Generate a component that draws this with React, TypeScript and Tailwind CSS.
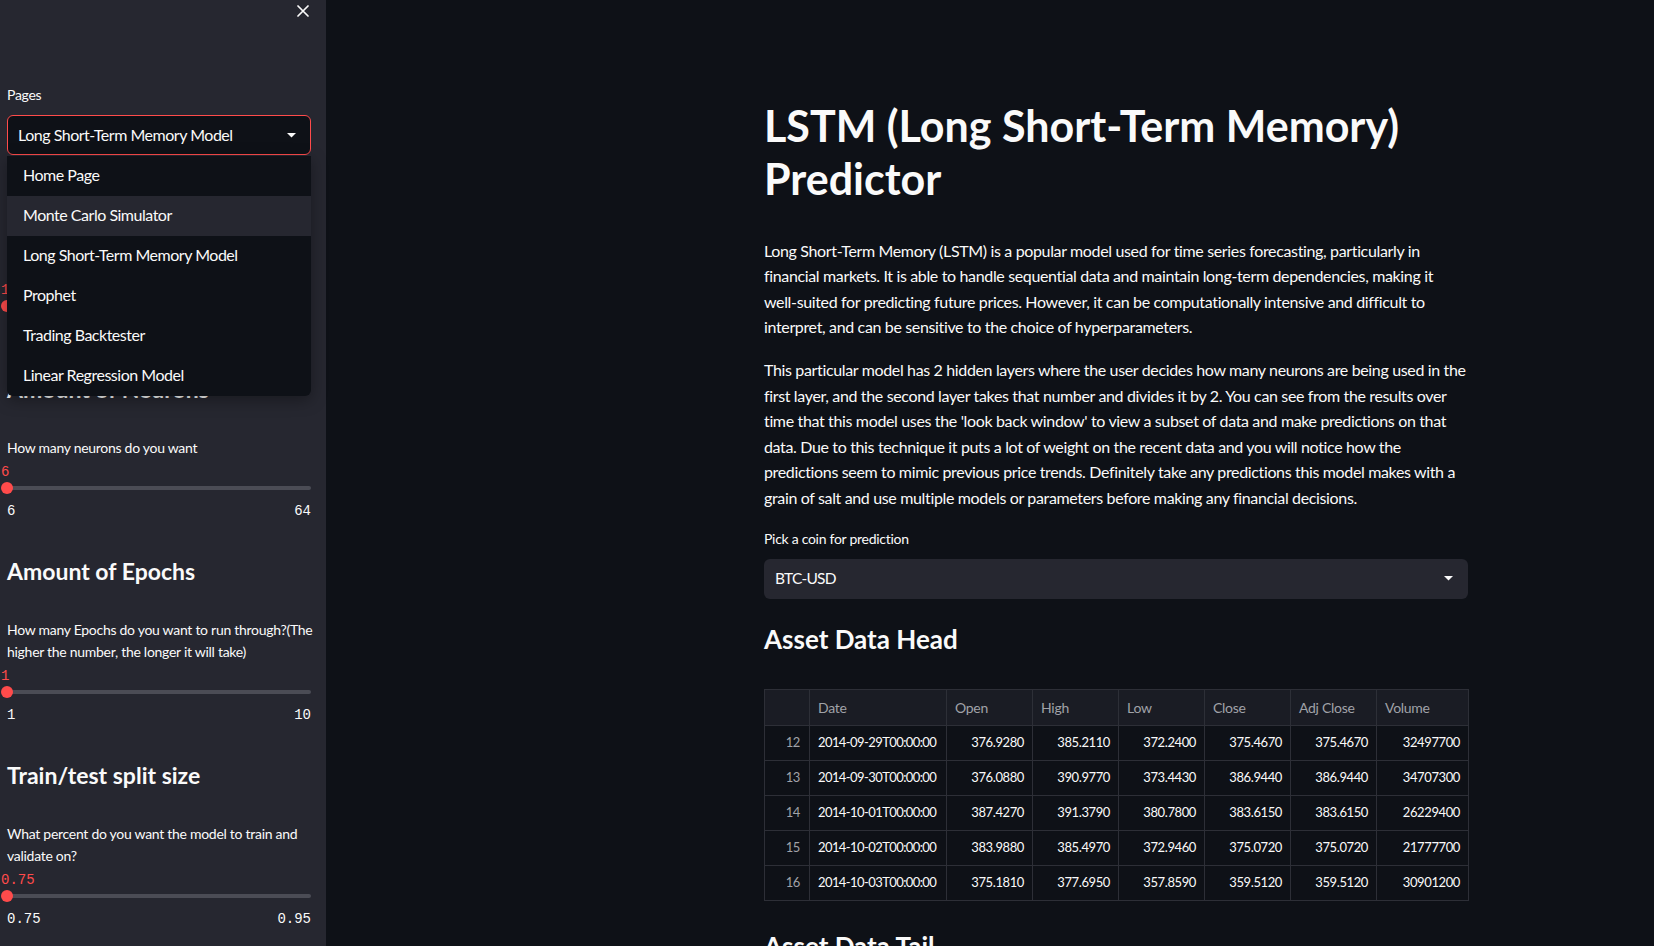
import React from 'react'

const introLines = [
  'Long Short-Term Memory (LSTM) is a popular model used for time series forecasting, particularly in',
  'financial markets. It is able to handle sequential data and maintain long-term dependencies, making it',
  'well-suited for predicting future prices. However, it can be computationally intensive and difficult to',
  'interpret, and can be sensitive to the choice of hyperparameters.',
]

const detailLines = [
  'This particular model has 2 hidden layers where the user decides how many neurons are being used in the',
  'first layer, and the second layer takes that number and divides it by 2. You can see from the results over',
  "time that this model uses the 'look back window' to view a subset of data and make predictions on that",
  'data. Due to this technique it puts a lot of weight on the recent data and you will notice how the',
  'predictions seem to mimic previous price trends. Definitely take any predictions this model makes with a',
  'grain of salt and use multiple models or parameters before making any financial decisions.',
]

const pages = [
  'Home Page',
  'Monte Carlo Simulator',
  'Long Short-Term Memory Model',
  'Prophet',
  'Trading Backtester',
  'Linear Regression Model',
]

const columns = ['Date', 'Open', 'High', 'Low', 'Close', 'Adj Close', 'Volume']
const colWidths = ['w-[45px]', 'w-[137px]', 'w-[86px]', 'w-[86px]', 'w-[86px]', 'w-[86px]', 'w-[86px]', 'w-[92px]']

const rows = [
  ['12', '2014-09-29T00:00:00', '376.9280', '385.2110', '372.2400', '375.4670', '375.4670', '32497700'],
  ['13', '2014-09-30T00:00:00', '376.0880', '390.9770', '373.4430', '386.9440', '386.9440', '34707300'],
  ['14', '2014-10-01T00:00:00', '387.4270', '391.3790', '380.7800', '383.6150', '383.6150', '26229400'],
  ['15', '2014-10-02T00:00:00', '383.9880', '385.4970', '372.9460', '375.0720', '375.0720', '21777700'],
  ['16', '2014-10-03T00:00:00', '375.1810', '377.6950', '357.8590', '359.5120', '359.5120', '30901200'],
]

function Caret() {
  return (
    <svg width="9" height="5" viewBox="0 0 9 5" className="shrink-0">
      <path d="M0 0h9L4.5 4.6z" fill="#fafafa" />
    </svg>
  )
}

type SliderProps = {
  title: string
  label: string[]
  value: string
  min: string
  max: string
  first?: boolean
}

function SliderBlock({ title, label, value, min, max, first }: SliderProps) {
  return (
    <section className={first ? 'mt-[36px]' : 'mt-[34px]'}>
      <h3 className="text-[23px] font-bold leading-[32px]">{title}</h3>
      <div className="mt-[32px] text-[14px] leading-[22px] tracking-[-0.02em]">
        {label.map((line) => (
          <span key={line} className="block whitespace-nowrap">{line}</span>
        ))}
      </div>
      <div className="-ml-[6px] mt-[3px] h-[20px] font-['Liberation_Mono',monospace] text-[14px] leading-[20px] text-[#ff4b4b]">
        {value}
      </div>
      <div className="relative flex h-[12px] items-center">
        <div className="h-[4px] w-full rounded-full bg-[#4b4c55]" />
        <div className="absolute -left-[6px] top-0 h-[12px] w-[12px] rounded-full bg-[#ff4b4b]" />
      </div>
      <div className="mt-[7px] flex h-[20px] justify-between font-['Liberation_Mono',monospace] text-[14px] leading-[20px]">
        <span>{min}</span>
        <span>{max}</span>
      </div>
    </section>
  )
}

export default function App() {
  return (
    <div className="flex h-[946px] w-full overflow-hidden bg-[#0e1117] font-['Lato',sans-serif] text-[#fafafa]">
      {/* Sidebar */}
      <aside className="w-[326px] shrink-0 bg-[#262730] pl-[7px] pr-[15px]">
        <div className="flex h-[84px] justify-end pr-[2px] pt-[5px]">
          <svg width="12" height="12" viewBox="0 0 12 12">
            <path d="M1 1l10 10M11 1L1 11" stroke="#fafafa" strokeWidth="1.7" strokeLinecap="round" />
          </svg>
        </div>
        <div className="text-[14px] leading-[22px] tracking-[-0.02em]">Pages</div>
        <div className="relative z-10 mt-[9px]">
          <div className="flex h-[40px] items-center justify-between rounded-[6px] border border-[#ff4b4b] bg-[#0e1117] pl-[10px] pr-[14px] text-[16px] tracking-[-0.03em]">
            <span>Long Short-Term Memory Model</span>
            <Caret />
          </div>
          <ul className="absolute left-0 right-0 top-[41px] overflow-hidden rounded-b-[6px] bg-[#0e1117] shadow-[0_4px_16px_rgba(0,0,0,0.35)]">
            {pages.map((page) => (
              <li
                key={page}
                className={`flex h-[40px] items-center pb-[2px] pl-[16px] text-[16px] tracking-[-0.03em] ${page === 'Monte Carlo Simulator' ? 'bg-[#262730]' : ''}`}
              >
                {page}
              </li>
            ))}
          </ul>
        </div>
        <SliderBlock first title="Look Back Window" label={['How many days do you want to look back?']} value="1" min="1" max="30" />
        <SliderBlock title="Amount of Neurons" label={['How many neurons do you want']} value="6" min="6" max="64" />
        <SliderBlock
          title="Amount of Epochs"
          label={['How many Epochs do you want to run through?(The', 'higher the number, the longer it will take)']}
          value="1"
          min="1"
          max="10"
        />
        <SliderBlock
          title="Train/test split size"
          label={['What percent do you want the model to train and', 'validate on?']}
          value="0.75"
          min="0.75"
          max="0.95"
        />
      </aside>

      {/* Main */}
      <main className="flex-1 pl-[438px] pt-[100px]">
        <div className="w-[704px]">
          <h1 className="text-[43px] font-bold leading-[52.8px]">
            LSTM (Long Short-Term Memory)
            <br />
            Predictor
          </h1>
          <p className="mt-[32px] text-[16px] leading-[25.6px] tracking-[-0.022em]">
            {introLines.map((line) => (
              <span key={line} className="block whitespace-nowrap">{line}</span>
            ))}
          </p>
          <p className="mt-[17px] text-[16px] leading-[25.6px] tracking-[-0.022em]">
            {detailLines.map((line) => (
              <span key={line} className="block whitespace-nowrap">{line}</span>
            ))}
          </p>
          <div className="mt-[17px] text-[14px] leading-[22.4px] tracking-[-0.02em]">Pick a coin for prediction</div>
          <div className="mt-[9px] flex h-[40px] items-center justify-between rounded-[6px] bg-[#262730] pl-[11px] pr-[15px] text-[15.5px] tracking-[-0.05em]">
            <span>BTC-USD</span>
            <Caret />
          </div>

          <h2 className="mt-[22px] text-[26px] font-bold leading-[36px]">Asset Data Head</h2>
          <table className="mt-[32px] w-[704px] table-fixed border-collapse border border-[#2d2f37] text-[14px]">
            <colgroup>
              {colWidths.map((w, i) => (
                <col key={i} className={w} />
              ))}
            </colgroup>
            <thead>
              <tr className="h-[36px] bg-[#1a1c24] text-[#a0a2a8]">
                <th className="border border-[#2d2f37]" />
                {columns.map((c) => (
                  <th key={c} className="border border-[#2d2f37] pl-[8px] text-left font-normal tracking-[-0.02em]">{c}</th>
                ))}
              </tr>
            </thead>
            <tbody>
              {rows.map((r) => (
                <tr key={r[0]} className="h-[35px] text-[13px]">
                  <td className="border border-[#2d2f37] pr-[9px] text-right tracking-[-0.03em] text-[#a0a2a8]">{r[0]}</td>
                  <td className="whitespace-nowrap border border-[#2d2f37] pl-[8px] text-left tracking-[-0.045em]">{r[1]}</td>
                  {r.slice(2).map((v, i) => (
                    <td key={i} className="whitespace-nowrap border border-[#2d2f37] pr-[8px] text-right tracking-[-0.03em]">{v}</td>
                  ))}
                </tr>
              ))}
            </tbody>
          </table>

          <h2 className="mt-[27px] text-[26px] font-bold leading-[36px]">Asset Data Tail</h2>
        </div>
      </main>
    </div>
  )
}
